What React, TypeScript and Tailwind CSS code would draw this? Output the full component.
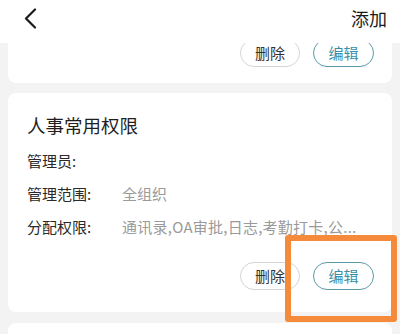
import React from "react";

const font = { fontFamily: '"Noto Sans CJK SC", "Noto Sans", sans-serif' };

function Row({ label, value, wide }: { label: string; value?: string; wide?: boolean }) {
  return (
    <div className="flex h-[20px] items-center text-[15px] leading-[20px]">
      <div className="w-[95px] shrink-0 text-[#2a2a2a]">{label}</div>
      <div className={`whitespace-nowrap text-[#9a9a9a] ${wide ? "tracking-[0.25px]" : ""}`}>{value}</div>
    </div>
  );
}

function Buttons({ cut }: { cut?: boolean }) {
  return (
    <div className={`flex justify-end gap-[13px] pr-[18px] ${cut ? "-mt-[4px]" : ""}`}>
      <div className="flex h-[28px] w-[60px] items-center justify-center rounded-full border border-[#d4d4d4] bg-white text-[15px] text-[#333]">
        删除
      </div>
      <div className="flex h-[28px] w-[61px] items-center justify-center rounded-full border-[1.5px] border-[#5a9aa8] bg-white text-[15px] text-[#3b8ea6]">
        编辑
      </div>
    </div>
  );
}

export default function App() {
  return (
    <div className="relative h-[334px] w-[400px] overflow-hidden bg-[#f3f3f3]" style={font}>
      <div className="relative z-10 flex h-[43px] items-center justify-between bg-white pl-[24px] pr-[13px]">
        <svg width="13" height="21" viewBox="0 0 13 21" className="-mt-[6px]">
          <polyline points="11,1.5 2,10.5 11,19.5" fill="none" stroke="#1a1a1a" strokeWidth="2.2" strokeLinecap="round" strokeLinejoin="round" />
        </svg>
        <div className="-mt-[6px] text-[18px] text-[#1a1a1a]">添加</div>
      </div>

      <div className="px-[8px]">
        <div className="h-[40px] overflow-hidden rounded-b-[8px] bg-white">
          <Buttons cut />
        </div>

        <div className="mt-[10px] rounded-[8px] bg-white pb-[22px] pt-[19px]">
          <div className="pl-[19px]">
            <div className="text-[18.5px] leading-[26px] text-[#1f1f1f]">人事常用权限</div>
            <div className="mt-[13px] flex flex-col gap-[13px]">
              <Row label="管理员:" />
              <Row label="管理范围:" value="全组织" />
              <Row label="分配权限:" value="通讯录,OA审批,日志,考勤打卡,公..." wide />
            </div>
          </div>
          <div className="mt-[25px]">
            <Buttons />
          </div>
        </div>

        <div className="mt-[11px] h-[40px] rounded-t-[8px] bg-white" />
      </div>

      <div className="absolute left-[285px] top-[235px] h-[87px] w-[112px] rounded-[3px] border-[6px] border-[#f58a3a]" />
    </div>
  );
}
